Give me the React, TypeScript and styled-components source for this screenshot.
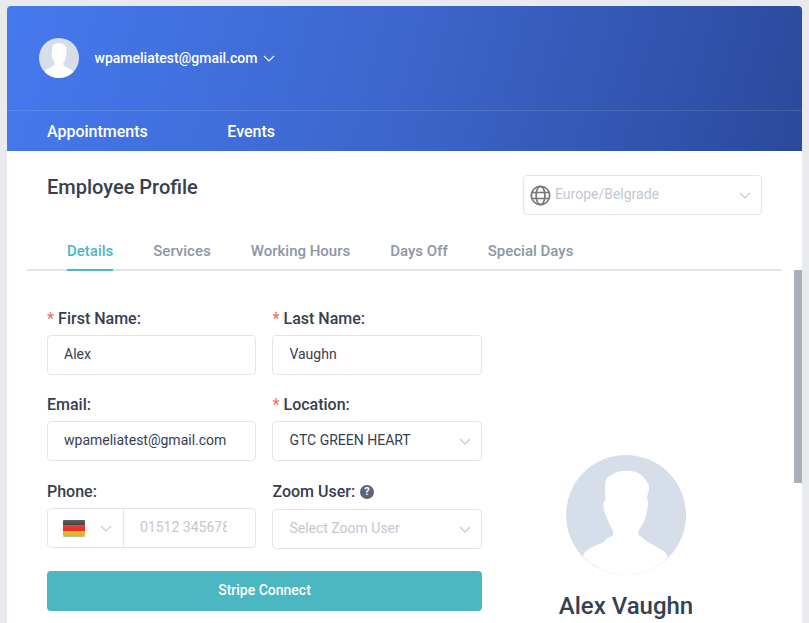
import React from 'react';
import styled, { createGlobalStyle } from 'styled-components';

const GlobalStyle = createGlobalStyle`
  html, body {
    margin: 0;
    padding: 0;
    height: 100%;
    overflow: hidden;
    background: #e9eaee;
    font-family: Roboto, "Liberation Sans", sans-serif;
  }
  * { box-sizing: border-box; }
`;

const Panel = styled.div`
  position: relative;
  width: 795px;
  height: 617px;
  margin: 6px 0 0 7px;
  background: #fff;
  border-radius: 4px 4px 0 0;
  overflow: hidden;
`;

const Header = styled.header`
  height: 145px;
  background: linear-gradient(105deg, #4679ee 0%, #3c66cc 50%, #2a499b 100%);
`;

const UserRow = styled.div`
  height: 105px;
  padding: 0 32px;
  display: flex;
  align-items: center;
  border-bottom: 1px solid rgba(255, 255, 255, 0.12);
`;

const UserEmail = styled.span`
  margin: 0 6px 0 15.5px;
  font-size: 14px;
  font-weight: 500;
  color: #fff;
`;

const NavRow = styled.nav`
  height: 40px;
  padding-left: 40px;
  display: flex;
  align-items: center;
  gap: 79.5px;
`;

const NavLink = styled.a`
  font-size: 16px;
  font-weight: 500;
  color: #fff;
`;

const Content = styled.main`
  padding: 24px 20px 0 20px;
`;

const TitleRow = styled.div`
  display: flex;
  justify-content: space-between;
  align-items: flex-start;
  padding: 0 20px;
`;

const Title = styled.h1`
  margin: 0;
  font-size: 20px;
  line-height: 24px;
  font-weight: 500;
  color: #354052;
`;

const Field = styled.div<{ $placeholder?: boolean }>`
  height: 40px;
  width: 100%;
  display: flex;
  align-items: center;
  justify-content: space-between;
  border: 1px solid #e2e4ec;
  border-radius: 4px;
  padding: 0 10px 2px 16px;
  font-size: 14px;
  color: ${p => (p.$placeholder ? '#c3c7d1' : '#354052')};
  background: #fff;
  white-space: nowrap;
  overflow: hidden;

  > svg {
    margin-top: 2px;
  }
`;

const TimezoneField = styled(Field)`
  width: 239px;
  padding-left: 6px;
`;

const TimezoneValue = styled.span`
  display: flex;
  align-items: center;
  gap: 4px;

  svg {
    transform: translateY(1px);
  }
`;

const Tabs = styled.div`
  margin-top: 16px;
  height: 40px;
  padding-left: 40px;
  display: flex;
  gap: 40px;
  border-bottom: 2px solid #e2e4ec;
`;

const Tab = styled.div<{ $active?: boolean }>`
  height: 40px;
  flex-shrink: 0;
  padding-top: 11px;
  font-size: 15px;
  line-height: 18px;
  font-weight: 500;
  color: ${p => (p.$active ? '#4ab8c1' : '#8d96a8')};
  border-bottom: 2px solid ${p => (p.$active ? '#4ab8c1' : 'transparent')};
`;

const Body = styled.div`
  display: flex;
  padding-left: 20px;
`;

const FormColumn = styled.div`
  width: 435px;
  flex-shrink: 0;
  padding-top: 36px;
`;

const FormGrid = styled.div`
  display: grid;
  grid-template-columns: 209.4px 209.6px;
  column-gap: 16px;
  row-gap: 18px;
`;

const LastRowCell = styled.div`
  padding-top: 1px;
`;

const Label = styled.label`
  display: flex;
  align-items: center;
  height: 22px;
  margin-bottom: 6px;
  font-size: 16px;
  font-weight: 500;
  color: #354052;
`;

const ZoomLabel = styled(Label)`
  height: 23px;
`;

const Required = styled.span`
  color: #f56c6c;
  margin-right: 4px;
`;

const HelpBadge = styled.span`
  width: 14px;
  height: 14px;
  margin-left: 5px;
  border-radius: 50%;
  background: #5b6578;
  color: #fff;
  font-size: 11px;
  font-weight: 700;
  display: flex;
  align-items: center;
  justify-content: center;
`;

const PhoneGroup = styled.div`
  display: flex;
  height: 40px;
  border: 1px solid #e2e4ec;
  border-radius: 4px;
  font-size: 14px;
  color: #c3c7d1;
`;

const FlagPicker = styled.div`
  width: 76px;
  padding: 0 11px 0 15px;
  display: flex;
  align-items: center;
  justify-content: space-between;
  border-right: 1px solid #e2e4ec;
`;

const Flag = styled.div`
  width: 22px;
  height: 16px;
  border-radius: 1px;
  box-shadow: 0 1px 1px rgba(0, 0, 0, 0.3);
  background:
    linear-gradient(rgba(255, 255, 255, 0.22), rgba(255, 255, 255, 0) 55%, rgba(0, 0, 0, 0.06)),
    linear-gradient(#333 0 33%, #ec2f2a 33% 66%, #e6c21f 66% 100%);
`;

const PhoneNumber = styled.div`
  width: 87px;
  margin-left: 16px;
  padding-bottom: 2px;
  display: flex;
  align-items: center;
  overflow: hidden;
  white-space: nowrap;
`;

const StripeButton = styled.button`
  display: block;
  width: 435px;
  height: 40px;
  margin-top: 22px;
  padding: 0 0 2px;
  border: 0;
  border-radius: 4px;
  background: #4ab7c1;
  color: #fff;
  font-family: inherit;
  font-size: 14px;
  font-weight: 500;
`;

const ProfileColumn = styled.div`
  width: 288px;
  padding-top: 184px;
  display: flex;
  flex-direction: column;
  align-items: center;
`;

const Name = styled.div`
  margin-top: 17px;
  font-size: 24px;
  line-height: 28px;
  font-weight: 500;
  color: #354052;
`;

const ScrollThumb = styled.div`
  position: absolute;
  right: 0;
  top: 264px;
  width: 8px;
  height: 213px;
  background: #a9b0bc;
`;

const Chevron = ({ color = '#c3c7d1' }: { color?: string }) => (
  <svg width="12" height="7" viewBox="0 0 12 7" fill="none" style={{ flexShrink: 0 }}>
    <path d="M1 1l5 5 5-5" stroke={color} strokeWidth="1.1" />
  </svg>
);

const Avatar = ({ size }: { size: number }) => (
  <svg width={size} height={size} viewBox="0 0 120 120" style={{ flexShrink: 0 }}>
    <circle cx="60" cy="60" r="60" fill="#d6deea" />
    <path
      fill="#fff"
      d="M60 16C55 16 52 16 49 18C46 20 43 21 41 23C39 26 39 31 39 36L39.5 45L37.5 47C37 52 38 58 41 63C43 68 45 72 47 76L47 81L41 83C38 87 35 89 31 90C26 92 22 94 19 97L17 101C27 112 43 120 60 120C76 120 92 113 102 102L99 97C95 94 91 92 87 90C83 88 80 86 77 83C74 81 72 80 72 78L74 73C77 69 79 65 80 60C81 56 82 52 82 48L81 42L83 35C83 31 83 29 81 27C78 22 76 20 72 18C68 16 65 16 60 16Z"
    />
  </svg>
);

const Globe = () => (
  <svg width="21" height="21" viewBox="0 0 21 21" fill="none" stroke="#777" strokeWidth="1.7">
    <circle cx="10.5" cy="10.5" r="9.2" />
    <ellipse cx="10.5" cy="10.5" rx="4.4" ry="9.2" />
    <path d="M2.2 7.5h16.6M2.2 13.5h16.6" />
  </svg>
);

export default function App() {
  return (
    <>
      <GlobalStyle />
      <Panel>
        <Header>
          <UserRow>
            <Avatar size={40} />
            <UserEmail>wpameliatest@gmail.com</UserEmail>
            <Chevron color="#fff" />
          </UserRow>
          <NavRow>
            <NavLink>Appointments</NavLink>
            <NavLink>Events</NavLink>
          </NavRow>
        </Header>
        <Content>
          <TitleRow>
            <Title>Employee Profile</Title>
            <TimezoneField $placeholder>
              <TimezoneValue>
                <Globe />
                Europe/Belgrade
              </TimezoneValue>
              <Chevron />
            </TimezoneField>
          </TitleRow>
          <Tabs>
            <Tab $active>Details</Tab>
            <Tab>Services</Tab>
            <Tab>Working Hours</Tab>
            <Tab>Days Off</Tab>
            <Tab>Special Days</Tab>
          </Tabs>
          <Body>
            <FormColumn>
              <FormGrid>
                <div>
                  <Label><Required>*</Required>First Name:</Label>
                  <Field>Alex</Field>
                </div>
                <div>
                  <Label><Required>*</Required>Last Name:</Label>
                  <Field>Vaughn</Field>
                </div>
                <div>
                  <Label>Email:</Label>
                  <Field>wpameliatest@gmail.com</Field>
                </div>
                <div>
                  <Label><Required>*</Required>Location:</Label>
                  <Field>GTC GREEN HEART<Chevron /></Field>
                </div>
                <LastRowCell>
                  <Label>Phone:</Label>
                  <PhoneGroup>
                    <FlagPicker>
                      <Flag />
                      <Chevron />
                    </FlagPicker>
                    <PhoneNumber>01512 3456789</PhoneNumber>
                  </PhoneGroup>
                </LastRowCell>
                <LastRowCell>
                  <ZoomLabel>Zoom User:<HelpBadge>?</HelpBadge></ZoomLabel>
                  <Field $placeholder>Select Zoom User<Chevron /></Field>
                </LastRowCell>
              </FormGrid>
              <StripeButton>Stripe Connect</StripeButton>
            </FormColumn>
            <ProfileColumn>
              <Avatar size={120} />
              <Name>Alex Vaughn</Name>
            </ProfileColumn>
          </Body>
        </Content>
        <ScrollThumb />
      </Panel>
    </>
  );
}
